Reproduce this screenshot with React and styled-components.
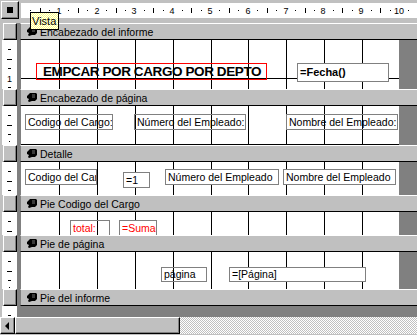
import React from 'react'
import styled, {createGlobalStyle, css} from 'styled-components'

const CM = 37.8
const QUARTER = CM / 4
const CANVAS_W = 378

const GlobalStyle = createGlobalStyle`
  html, body {
    margin: 0;
    padding: 0;
    background: #c0c0c0;
  }
  body {
    font-family: "Liberation Sans", Arial, sans-serif;
    overflow: hidden;
  }
`

const raised = css`
  background: #c0c0c0;
  box-sizing: border-box;
  border-style: solid;
  border-width: 1px;
  border-color: #fff #000 #000 #fff;
  box-shadow: inset -1px -1px 0 #808080;
`

const Window = styled.div`
  position: relative;
  width: 417px;
  height: 335px;
  background: #c0c0c0;
  display: flex;
  flex-direction: column;
  overflow: hidden;
`

const TopRow = styled.div`
  display: flex;
  flex: none;
  height: 23px;
`

const Corner = styled.div`
  width: 20px;
  flex: none;
  padding: 1px;
  box-sizing: border-box;
`

const CornerButton = styled.div`
  ${raised}
  width: 18px;
  height: 18px;
  display: flex;
  align-items: center;
  justify-content: center;

  &::after {
    content: '';
    width: 6px;
    height: 6px;
    background: #000;
  }
`

const HRulerStrip = styled.div`
  flex: 1;
  margin: 3px 0 0 1px;
  height: 15px;
  background: #fff;
  overflow: hidden;
`

const Row = styled.div`
  display: flex;
  flex: none;
  height: ${p => p.$h}px;
`

const Side = styled.div`
  width: 20px;
  flex: none;
  display: flex;
  box-sizing: border-box;
  padding-left: 2px;
  border-right: 3px solid #808080;
`

const SideRuler = styled.div`
  flex: 1;
  background: #fff;
  overflow: hidden;
`

const SelectorButton = styled.div`
  ${raised}
  flex: 1;
  margin-left: 1px;
`

const Bar = styled.div`
  flex: 1;
  display: flex;
  align-items: center;
  gap: 3px;
  box-sizing: border-box;
  padding-left: 6px;
  border-left: 1px solid #808080;
  border-top: 1px solid #fff;
  border-bottom: 1px solid #000;
  font-size: 10.5px;
  color: #000;
  white-space: nowrap;
`

const Main = styled.div`
  flex: 1;
  display: flex;
  border-left: 1px solid #808080;
  background: ${p => (p.$outside ? '#808080' : 'transparent')};
`

const Canvas = styled.div`
  position: relative;
  width: ${CANVAS_W}px;
  flex: none;
  background: #fff;
  overflow: hidden;
`

const Outside = styled.div`
  flex: 1;
  background: #808080;
`

const GridSvg = styled.svg`
  position: absolute;
  left: 0;
  top: 0;
  display: block;
`

const Control = styled.div`
  position: absolute;
  left: ${p => p.$x}px;
  top: ${p => p.$y}px;
  width: ${p => p.$w}px;
  height: ${p => p.$h}px;
  box-sizing: border-box;
  border: 1px solid ${p => (p.$frame === 'red' ? '#ff0000' : '#808080')};
  background: ${p => (p.$field ? '#fff' : 'transparent')};
  color: ${p => (p.$red ? '#ff0000' : '#000')};
  font-size: 10.5px;
  line-height: ${p => p.$h - 2}px;
  padding-left: 2px;
  white-space: nowrap;
  overflow: hidden;
`

const TitleLabel = styled(Control)`
  font-size: 13.5px;
  font-weight: bold;
  letter-spacing: -0.4px;
  padding-left: 6px;
`

const BoldField = styled(Control)`
  font-size: 11px;
  font-weight: bold;
  line-height: 13px;
  padding-top: 2px;
`

const Tooltip = styled.div`
  position: absolute;
  left: 30px;
  top: 12px;
  width: 29px;
  height: 18px;
  box-sizing: border-box;
  border: 1px solid #000;
  background: repeating-conic-gradient(#ffff80 0 25%, #ffffff 0 50%) 0 0 / 2px 2px;
  font-size: 11px;
  line-height: 16px;
  padding-left: 1px;
  color: #000;
`

const ScrollBar = styled.div`
  display: flex;
  flex: none;
  height: 17px;
`

const ArrowButton = styled.div`
  ${raised}
  width: 15px;
  flex: none;
  display: flex;
  align-items: center;
  justify-content: center;

  &::before {
    content: '';
    width: 0;
    height: 0;
    border-top: 4px solid transparent;
    border-bottom: 4px solid transparent;
    border-right: 4px solid #000;
    margin-left: -2px;
  }
`

const Thumb = styled.div`
  ${raised}
  width: 165px;
  flex: none;
`

const Track = styled.div`
  flex: 1;
  background: repeating-conic-gradient(#c0c0c0 0 25%, #ffffff 0 50%) 0 0 / 2px 2px;
`

// little black "pointing hand" shown at the start of every section bar
const BarIcon = () => (
  <svg width="10" height="9" viewBox="0 0 10 9" style={{flex: 'none'}}>
    <path d="M3 0 H9 L10 1 V6 L8 8 H5 L2 9 L1 8 L2 6 L0 5 V3 Z" fill="#000" />
    <path d="M5 2 H8 M5 4 H8" stroke="#c0c0c0" strokeWidth="0.6" />
  </svg>
)

const HRuler = () => {
  const marks = []
  for (let k = 1; k * QUARTER < 400; k++) {
    const x = Math.round(k * QUARTER)
    if (k % 4 === 0) {
      marks.push(
        <text key={k} x={x} y={11} fontSize="9" textAnchor="middle" fill="#000"
          fontFamily="Liberation Sans, Arial, sans-serif">{k / 4}</text>
      )
    } else if (k % 4 === 2) {
      marks.push(<rect key={k} x={x} y={5} width={1} height={5} fill="#000" />)
    } else {
      marks.push(<rect key={k} x={x} y={7} width={1} height={1} fill="#000" />)
    }
  }
  return <svg width="400" height="15" style={{display: 'block'}}>{marks}</svg>
}

const VRuler = ({h}) => {
  const marks = []
  for (let k = 1; k * QUARTER < h + 4; k++) {
    const y = Math.round(k * QUARTER)
    if (k % 4 === 0) {
      if (y + 4 <= h) {
        marks.push(
          <text key={k} x={7.5} y={y + 3.5} fontSize="9" textAnchor="middle" fill="#000"
            fontFamily="Liberation Sans, Arial, sans-serif">{k / 4}</text>
        )
      } else {
        marks.push(<rect key={k} x={7} y={y - 3} width={1} height={1} fill="#000" />)
      }
    } else if (k % 4 === 2) {
      marks.push(<rect key={k} x={5} y={y} width={5} height={1} fill="#000" />)
    } else {
      marks.push(<rect key={k} x={6} y={y} width={3} height={1} fill="#000" />)
    }
  }
  return <svg width="15" height={h} style={{display: 'block'}}>{marks}</svg>
}

const Grid = ({h}) => {
  const lines = []
  for (let k = 1; k * CM < CANVAS_W - 2; k++) {
    lines.push(<rect key={'v' + k} x={Math.round(k * CM + 0.6)} y={0} width={1} height={h} fill="#000" />)
  }
  for (let k = 1; k * CM < h; k++) {
    lines.push(<rect key={'h' + k} x={0} y={Math.round(k * CM)} width={CANVAS_W} height={1} fill="#000" />)
  }
  return <GridSvg width={CANVAS_W} height={h}>{lines}</GridSvg>
}

const sections = [
  {
    title: 'Encabezado del informe',
    height: 49,
    controls: [
      {text: 'EMPCAR POR CARGO POR DEPTO', x: 15, y: 23, w: 231, h: 17, kind: 'title'},
      {text: '=Fecha()', x: 276, y: 23, w: 92, h: 19, kind: 'bold'},
    ],
  },
  {
    title: 'Encabezado de página',
    height: 39,
    controls: [
      {text: 'Codigo del Cargo:', x: 4, y: 8, w: 88, h: 16},
      {text: 'Número del Empleado:', x: 113, y: 8, w: 112, h: 16},
      {text: 'Nombre del Empleado:', x: 265, y: 8, w: 112, h: 16},
    ],
  },
  {
    title: 'Detalle',
    height: 33,
    controls: [
      {text: 'Codigo del Car', x: 4, y: 7, w: 72, h: 16, field: true},
      {text: '=1', x: 102, y: 10, w: 27, h: 16, field: true},
      {text: 'Número del Empleado', x: 144, y: 7, w: 114, h: 16, field: true},
      {text: 'Nombre del Empleado', x: 262, y: 7, w: 113, h: 16, field: true},
    ],
  },
  {
    title: 'Pie Codigo del Cargo',
    height: 23,
    controls: [
      {text: 'total:', x: 49, y: 8, w: 40, h: 16, red: true},
      {text: '=Suma(', x: 98, y: 8, w: 38, h: 16, red: true, field: true},
    ],
  },
  {
    title: 'Pie de página',
    height: 37,
    controls: [
      {text: 'página', x: 140, y: 15, w: 46, h: 15},
      {text: '=[Página]', x: 208, y: 15, w: 137, h: 15, field: true},
    ],
  },
  {title: 'Pie del informe', height: 0, controls: []},
]

const ReportControl = ({text, x, y, w, h, kind, field, red}) => {
  const shared = {$x: x, $y: y, $w: w, $h: h}
  if (kind === 'title') return <TitleLabel {...shared} $frame="red">{text}</TitleLabel>
  if (kind === 'bold') return <BoldField {...shared} $field>{text}</BoldField>
  return <Control {...shared} $field={field} $red={red}>{text}</Control>
}

const Section = ({title, height, controls}) => (
  <>
    <Row $h={17}>
      <Side><SelectorButton /></Side>
      <Bar><BarIcon />{title}</Bar>
    </Row>
    {height > 0 && (
      <Row $h={height}>
        <Side><SideRuler><VRuler h={height} /></SideRuler></Side>
        <Main>
          <Canvas>
            <Grid h={height} />
            {controls.map(c => <ReportControl key={c.text} {...c} />)}
          </Canvas>
          <Outside />
        </Main>
      </Row>
    )}
  </>
)

export default function App() {
  return (
    <>
      <GlobalStyle />
      <Window>
        <TopRow>
          <Corner><CornerButton /></Corner>
          <HRulerStrip><HRuler /></HRulerStrip>
        </TopRow>
        {sections.map(s => <Section key={s.title} {...s} />)}
        <Row $h={11}>
          <Side><SideRuler><VRuler h={11} /></SideRuler></Side>
          <Main $outside />
        </Row>
        <ScrollBar>
          <ArrowButton />
          <Thumb />
          <Track />
        </ScrollBar>
        <Tooltip>Vista</Tooltip>
      </Window>
    </>
  )
}
